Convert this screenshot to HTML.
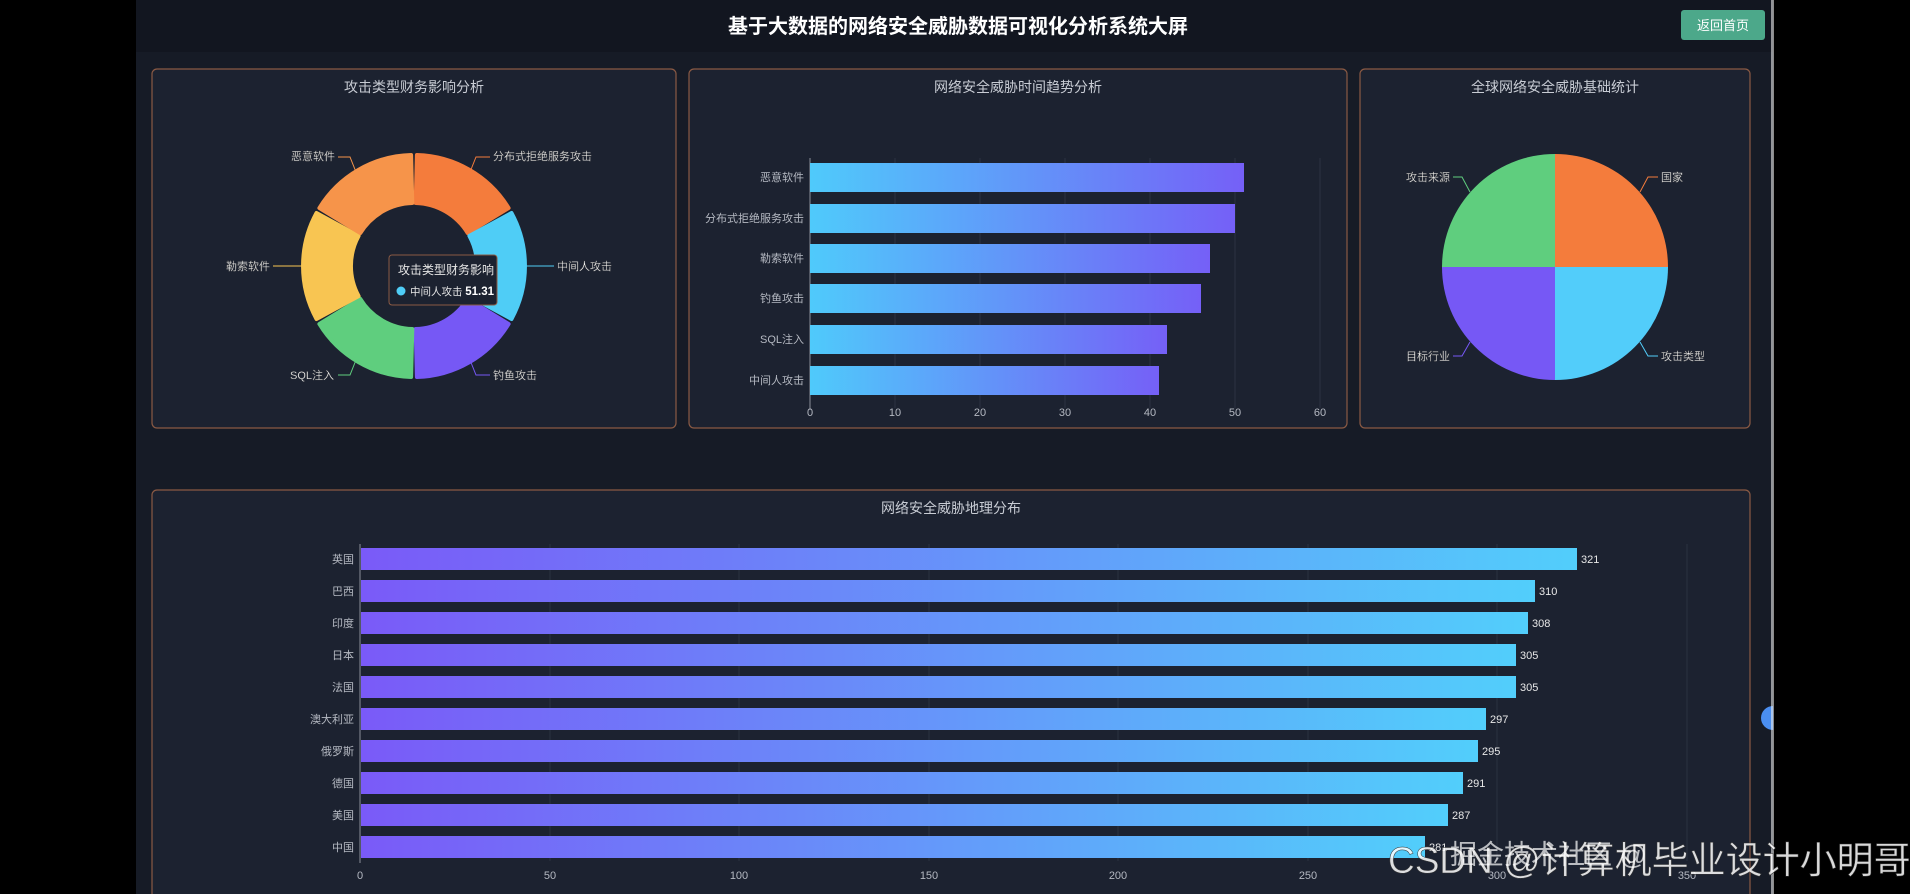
<!DOCTYPE html>
<html><head><meta charset="utf-8"><style>
html,body{margin:0;padding:0;background:#000;width:1910px;height:894px;overflow:hidden;font-family:"Liberation Sans","Noto Sans CJK SC",sans-serif}
svg{display:block}
</style></head><body>
<svg width="1910" height="894" viewBox="0 0 1910 894" xmlns="http://www.w3.org/2000/svg" font-family="Liberation Sans, Noto Sans CJK SC, sans-serif">
<defs>
<linearGradient id="g1" x1="0" x2="1" y1="0" y2="0"><stop offset="0" stop-color="#4fcafb"/><stop offset="1" stop-color="#7560f7"/></linearGradient>
<linearGradient id="g2" x1="0" x2="1" y1="0" y2="0"><stop offset="0" stop-color="#7a5af8"/><stop offset="1" stop-color="#52cefb"/></linearGradient>
</defs>
<rect x="0" y="0" width="1910" height="894" fill="#000"/>
<rect x="136" y="0" width="1637" height="894" fill="#161b26"/>
<rect x="136" y="0" width="1637" height="52" fill="#121620"/>
<text x="958" y="33" fill="#fff" font-size="20" font-weight="bold" text-anchor="middle">基于大数据的网络安全威胁数据可视化分析系统大屏</text>
<rect x="1681" y="10" width="84" height="30" rx="3" fill="#4ca88a"/>
<text x="1723" y="30" fill="#fff" font-size="13" text-anchor="middle">返回首页</text>

<g fill="#1c2230" stroke="#8a5a44" stroke-width="1.2">
<rect x="152" y="69" width="524" height="359" rx="5"/>
<rect x="689" y="69" width="658" height="359" rx="5"/>
<rect x="1360" y="69" width="390" height="359" rx="5"/>
<rect x="152" y="490" width="1598" height="420" rx="5"/>
</g>
<g fill="#c8ccd4" font-size="14" text-anchor="middle">
<text x="414" y="92">攻击类型财务影响分析</text>
<text x="1018" y="92">网络安全威胁时间趋势分析</text>
<text x="1555" y="92">全球网络安全威胁基础统计</text>
<text x="951" y="513">网络安全威胁地理分布</text>
</g>

<g stroke-linejoin="round" stroke-width="4">
<path d="M416.9 155 A111 111 0 0 1 508.6 208 L467.7 233.1 A63 63 0 0 0 415.7 203 Z" fill="#f47c3c" stroke="#f47c3c"/>
<path d="M511.5 213 A111 111 0 0 1 511.5 319 L469.4 296.1 A63 63 0 0 0 469.4 235.9 Z" fill="#4fcdf6" stroke="#4fcdf6"/>
<path d="M508.6 324 A111 111 0 0 1 416.9 377 L415.7 329 A63 63 0 0 0 467.7 298.9 Z" fill="#7658f5" stroke="#7658f5"/>
<path d="M411.1 377 A111 111 0 0 1 319.4 324 L360.3 298.9 A63 63 0 0 0 412.3 329 Z" fill="#5fce7e" stroke="#5fce7e"/>
<path d="M316.5 319 A111 111 0 0 1 316.5 213 L358.6 235.9 A63 63 0 0 0 358.6 296.1 Z" fill="#f8c552" stroke="#f8c552"/>
<path d="M319.4 208 A111 111 0 0 1 411.1 155 L412.3 203 A63 63 0 0 0 360.3 233.1 Z" fill="#f6944a" stroke="#f6944a"/>
</g>
<g fill="none" stroke-width="1">
<path d="M470 172 L476 157 L490 157" stroke="#f47c3c"/>
<path d="M356 172 L350 157 L338 157" stroke="#f6944a"/>
<path d="M525 266 L554 266" stroke="#4fcdf6"/>
<path d="M303 266 L273 266" stroke="#f8c552"/>
<path d="M356 360 L350 375 L338 375" stroke="#5fce7e"/>
<path d="M470 360 L476 375 L490 375" stroke="#7658f5"/>
</g>
<g fill="#fff" font-size="11" stroke="#444" stroke-width="0.3">
<text x="493" y="160">分布式拒绝服务攻击</text>
<text x="335" y="160" text-anchor="end">恶意软件</text>
<text x="557" y="270">中间人攻击</text>
<text x="270" y="270" text-anchor="end">勒索软件</text>
<text x="334" y="379" text-anchor="end">SQL注入</text>
<text x="493" y="379">钓鱼攻击</text>
</g>
<rect x="389" y="255" width="108" height="50" rx="3" fill="#1c2230" stroke="#8a5a44"/>
<text x="398" y="274" fill="#e6e6e6" font-size="12">攻击类型财务影响</text>
<circle cx="401" cy="291" r="4.5" fill="#4fcdf6"/>
<text x="410" y="295" fill="#e6e6e6" font-size="10.5">中间人攻击</text>
<text x="494" y="295" fill="#fff" font-size="11.5" font-weight="bold" text-anchor="end">51.31</text>

<g stroke="#2c3342" stroke-width="1">
<line x1="895" y1="158" x2="895" y2="408"/><line x1="980" y1="158" x2="980" y2="408"/>
<line x1="1065" y1="158" x2="1065" y2="408"/><line x1="1150" y1="158" x2="1150" y2="408"/>
<line x1="1235" y1="158" x2="1235" y2="408"/><line x1="1320" y1="158" x2="1320" y2="408"/>
</g>
<line x1="810" y1="158" x2="810" y2="410" stroke="#8a8f99"/>
<g fill="url(#g1)">
<rect x="810" y="163" width="434" height="29"/>
<rect x="810" y="204" width="425" height="29"/>
<rect x="810" y="244" width="400" height="29"/>
<rect x="810" y="284" width="391" height="29"/>
<rect x="810" y="325" width="357" height="29"/>
<rect x="810" y="366" width="349" height="29"/>
</g>
<g fill="#b5b9c2" font-size="11" text-anchor="end">
<text x="804" y="181">恶意软件</text>
<text x="804" y="222">分布式拒绝服务攻击</text>
<text x="804" y="262">勒索软件</text>
<text x="804" y="302">钓鱼攻击</text>
<text x="804" y="343">SQL注入</text>
<text x="804" y="384">中间人攻击</text>
</g>
<g fill="#b5b9c2" font-size="11" text-anchor="middle">
<text x="810" y="416">0</text><text x="895" y="416">10</text><text x="980" y="416">20</text>
<text x="1065" y="416">30</text><text x="1150" y="416">40</text><text x="1235" y="416">50</text><text x="1320" y="416">60</text>
</g>

<path d="M1555 267 L1555 154 A113 113 0 0 1 1668 267 Z" fill="#f47c3c"/>
<path d="M1555 267 L1668 267 A113 113 0 0 1 1555 380 Z" fill="#52cdfa"/>
<path d="M1555 267 L1555 380 A113 113 0 0 1 1442 267 Z" fill="#7658f5"/>
<path d="M1555 267 L1442 267 A113 113 0 0 1 1555 154 Z" fill="#5fce7e"/>
<g fill="none" stroke-width="1">
<path d="M1640 192 L1648 177 L1658 177" stroke="#f47c3c"/>
<path d="M1470 192 L1462 177 L1453 177" stroke="#5fce7e"/>
<path d="M1470 342 L1462 356 L1453 356" stroke="#7658f5"/>
<path d="M1640 342 L1648 356 L1658 356" stroke="#52cdfa"/>
</g>
<g fill="#fff" font-size="11" stroke="#444" stroke-width="0.3">
<text x="1661" y="181">国家</text>
<text x="1450" y="181" text-anchor="end">攻击来源</text>
<text x="1450" y="360" text-anchor="end">目标行业</text>
<text x="1661" y="360">攻击类型</text>
</g>

<g stroke="#2a3140" stroke-width="1">
<line x1="550" y1="544" x2="550" y2="861"/><line x1="739" y1="544" x2="739" y2="861"/>
<line x1="929" y1="544" x2="929" y2="861"/><line x1="1118" y1="544" x2="1118" y2="861"/>
<line x1="1308" y1="544" x2="1308" y2="861"/><line x1="1497" y1="544" x2="1497" y2="861"/>
<line x1="1687" y1="544" x2="1687" y2="861"/>
</g>
<line x1="360" y1="544" x2="360" y2="863" stroke="#8a8f99"/>
<g fill="url(#g2)">
<rect x="361" y="548" width="1216" height="22"/>
<rect x="361" y="580" width="1174" height="22"/>
<rect x="361" y="612" width="1167" height="22"/>
<rect x="361" y="644" width="1155" height="22"/>
<rect x="361" y="676" width="1155" height="22"/>
<rect x="361" y="708" width="1125" height="22"/>
<rect x="361" y="740" width="1117" height="22"/>
<rect x="361" y="772" width="1102" height="22"/>
<rect x="361" y="804" width="1087" height="22"/>
<rect x="361" y="836" width="1064" height="22"/>
</g>
<g fill="#b5b9c2" font-size="11" text-anchor="end">
<text x="354" y="563">英国</text><text x="354" y="595">巴西</text><text x="354" y="627">印度</text>
<text x="354" y="659">日本</text><text x="354" y="691">法国</text><text x="354" y="723">澳大利亚</text>
<text x="354" y="755">俄罗斯</text><text x="354" y="787">德国</text><text x="354" y="819">美国</text><text x="354" y="851">中国</text>
</g>
<g fill="#e8e8e8" font-size="11">
<text x="1581" y="563">321</text><text x="1539" y="595">310</text><text x="1532" y="627">308</text>
<text x="1520" y="659">305</text><text x="1520" y="691">305</text><text x="1490" y="723">297</text>
<text x="1482" y="755">295</text><text x="1467" y="787">291</text><text x="1452" y="819">287</text><text x="1429" y="851">281</text>
</g>
<g fill="#b5b9c2" font-size="11" text-anchor="middle">
<text x="360" y="879">0</text><text x="550" y="879">50</text><text x="739" y="879">100</text>
<text x="929" y="879">150</text><text x="1118" y="879">200</text><text x="1308" y="879">250</text>
<text x="1497" y="879">300</text><text x="1687" y="879">350</text>
</g>
<path d="M1773 706 A12 12 0 0 0 1773 730 Z" fill="#4a8ef0"/>
<rect x="1771" y="0" width="3" height="894" fill="#e8e8e8" opacity="0.6"/>

<text x="1388" y="873" fill="#fff" fill-opacity="0.85" font-size="37" stroke="#333" stroke-width="0.5">CSDN @计算机毕业设计小明哥</text>
<text x="1450" y="864" fill="#fff" fill-opacity="0.7" font-size="27">掘金技术社区 @</text>
</svg>
</body></html>
